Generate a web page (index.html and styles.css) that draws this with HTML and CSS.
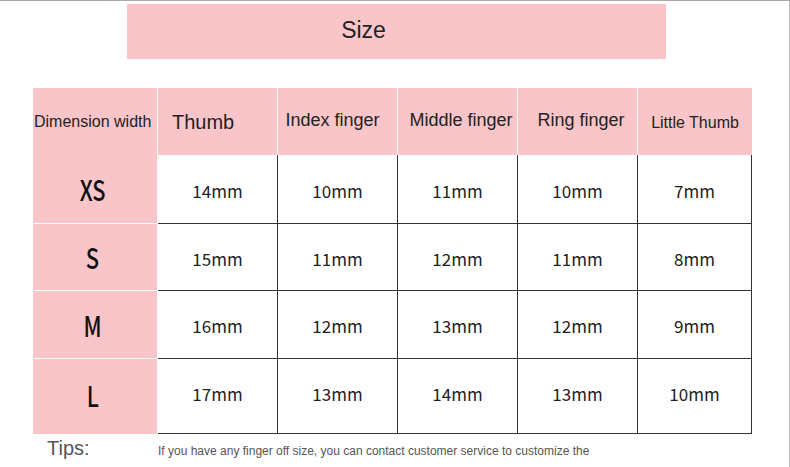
FILE: index.html
```html
<!DOCTYPE html>
<html>
<head>
<meta charset="utf-8">
<link rel="stylesheet" href="styles.css">
</head>
<body>
<div class="page">
  <div class="title-bar"><span class="title">Size</span></div>
  <div class="chart">
    <div class="hd hd-dim">Dimension width</div>
    <div class="hd hd-thumb">Thumb</div>
    <div class="hd hd-index">Index finger</div>
    <div class="hd hd-middle">Middle finger</div>
    <div class="hd hd-ring">Ring finger</div>
    <div class="hd hd-little">Little Thumb</div>

    <div class="sz"><span class="sz-t">XS</span></div>
    <div class="val">14mm</div><div class="val">10mm</div><div class="val">11mm</div><div class="val">10mm</div><div class="val">7mm</div>

    <div class="sz"><span class="sz-t">S</span></div>
    <div class="val">15mm</div><div class="val">11mm</div><div class="val">12mm</div><div class="val">11mm</div><div class="val">8mm</div>

    <div class="sz"><span class="sz-t">M</span></div>
    <div class="val">16mm</div><div class="val">12mm</div><div class="val">13mm</div><div class="val">12mm</div><div class="val">9mm</div>

    <div class="sz sz-last"><span class="sz-t">L</span></div>
    <div class="val val-last">17mm</div><div class="val val-last">13mm</div><div class="val val-last">14mm</div><div class="val val-last">13mm</div><div class="val val-last">10mm</div>
  </div>
  <div class="tips">
    <div class="tips-label">Tips:</div>
    <div class="tips-text">If you have any finger off size, you can contact customer service to customize the</div>
  </div>
</div>
</body>
</html>
```
FILE: styles.css
```css
html, body {
  margin: 0;
  padding: 0;
  background: #ffffff;
}
.page {
  box-sizing: border-box;
  width: 790px;
  height: 467px;
  border-top: 1px solid #a9a9a9;
  border-right: 1px solid #bdbdbd;
  padding-top: 3px;
  font-family: "Liberation Sans", Arial, sans-serif;
  color: #222;
  overflow: hidden;
}
.title-bar {
  margin-left: 127px;
  width: 539px;
  height: 55px;
  background: #f9c5c9;
  display: flex;
  align-items: center;
  justify-content: center;
  padding-right: 66px;
  box-sizing: border-box;
}
.title {
  font-size: 23px;
  color: #222;
  padding-bottom: 2px;
}
.chart {
  margin-top: 29px;
  margin-left: 33px;
  display: grid;
  grid-template-columns: 125px 120px 120px 120px 120px 114px;
  grid-template-rows: 67px 69px 67px 68px 75px;
  width: 719px;
}
.hd {
  background: #fac5c9;
  border-right: 1px solid #fff;
  display: flex;
  align-items: center;
  justify-content: center;
  color: #222;
  box-sizing: border-box;
  font-size: 18px;
  padding-bottom: 2px;
}
.hd-dim {
  font-size: 16px;
  justify-content: flex-start;
  padding-left: 1px;
  padding-bottom: 0;
}
.hd-thumb {
  font-size: 20px;
  justify-content: flex-start;
  padding-left: 14px;
  padding-bottom: 0;
  padding-top: 2px;
}
.hd-index {
  padding-right: 10px;
}
.hd-middle {
  padding-left: 7px;
}
.hd-ring {
  padding-left: 7px;
}
.hd-little {
  font-size: 16px;
  border-right: none;
  padding-bottom: 0;
  padding-top: 2px;
}
.sz {
  background: #fac5c9;
  border-right: 1px solid #fff;
  border-bottom: 1px solid #fff;
  box-sizing: border-box;
  display: flex;
  align-items: center;
  justify-content: center;
  padding-right: 4px;
}
.sz-last {
  border-bottom: none;
  padding-bottom: 4px;
}
.sz-t {
  display: inline-block;
  font-family: "Noto Sans CJK SC", "Noto Sans", sans-serif;
  font-size: 28px;
  font-weight: 500;
  color: #111;
  transform: scaleX(0.78);
  line-height: 1;
}
.val {
  box-sizing: border-box;
  border-right: 1px solid #333;
  border-bottom: 1px solid #333;
  display: flex;
  align-items: center;
  justify-content: center;
  font-family: "Noto Sans CJK SC", "Noto Sans", sans-serif;
  font-size: 17px;
  color: #222;
  padding-top: 2px;
}
.val-last {
  padding-top: 0;
  padding-bottom: 6px;
}
.tips {
  display: flex;
  align-items: baseline;
  margin-top: 3px;
}
.tips-label {
  width: 158px;
  box-sizing: border-box;
  padding-left: 47px;
  font-size: 20px;
  color: #555;
}
.tips-text {
  font-size: 12px;
  color: #555;
}
```
